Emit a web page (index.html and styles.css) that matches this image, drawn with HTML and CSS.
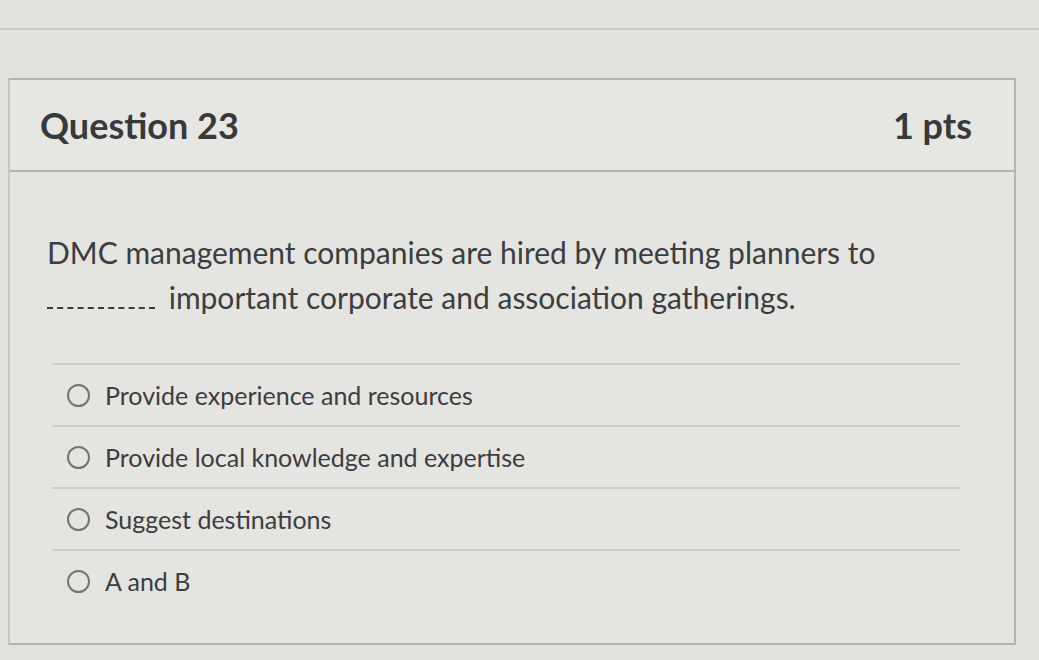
FILE: index.html
```html
<!DOCTYPE html>
<html>
<head>
  <title>Quiz | Question 23</title>
  <link rel="stylesheet" href="styles.css">
</head>
<body>
  <div class="top-rule"></div>
  <div class="question">
    <div class="question-header">
      <span class="question-name">Question 23</span>
      <span class="question-points">1 pts</span>
    </div>
    <div class="question-body">
      <p class="question-text">DMC management companies are hired by meeting planners to <span class="blank"></span> important corporate and association gatherings.</p>
      <div class="answers">
        <label class="answer"><span class="radio"></span>Provide experience and resources</label>
        <label class="answer"><span class="radio"></span>Provide local knowledge and expertise</label>
        <label class="answer"><span class="radio"></span>Suggest destinations</label>
        <label class="answer"><span class="radio"></span>A and B</label>
      </div>
    </div>
  </div>
</body>
</html>
```

FILE: styles.css
```css
body {
  font-family: Lato, "Open Sans", sans-serif;
  margin: 0;
  padding-top: 28px;
  background-color: #e1e1dd;
  color: #3b3d3f;
  overflow: hidden;
}

.top-rule {
  border-top: 2px solid #c9c9c5;
  margin-bottom: 48px;
}

.question {
  margin-left: 8px;
  width: 1004px;
  border: 2px solid #b4b5b2;
  border-left-color: #c6c6c2;
  background-color: #e4e4e0;
}

.question-header {
  display: flex;
  justify-content: space-between;
  align-items: center;
  height: 90px;
  padding: 0 42px 0 30px;
  background-color: #e6e6e2;
  border-bottom: 2px solid #b3b4b1;
}

.question-name,
.question-points {
  font-size: 36px;
  font-weight: bold;
  color: #37393b;
}

.question-body {
  padding: 58px 50px 32px 37px;
}

.question-text {
  margin: 0 0 43px;
  font-size: 30px;
  line-height: 45px;
}

/* fill-in blank, drawn as a dashed underline */
.blank {
  display: inline-block;
  width: 108px;
  border-bottom: 2px dashed #3b3d3f;
  margin-right: 6px;
}

.answers {
  border-top: 2px solid #cdcdc9;
  margin-left: 5px;
  margin-right: 4px;
}

.answer {
  display: flex;
  align-items: center;
  height: 60px;
  padding-left: 15px;
  font-size: 25px;
  border-bottom: 2px solid #cdcdc9;
}

.answer:last-child {
  border-bottom: none;
}

.radio {
  width: 19px;
  height: 19px;
  border: 2px solid #727476;
  border-radius: 50%;
  margin-right: 15px;
  flex-shrink: 0;
}
```
